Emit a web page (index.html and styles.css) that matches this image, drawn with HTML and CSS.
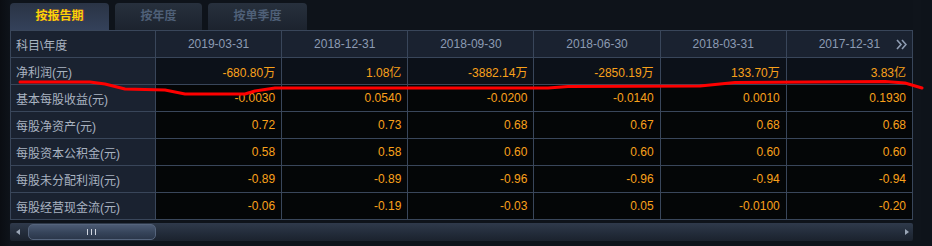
FILE: index.html
```html
<!DOCTYPE html>
<html lang="zh-CN">
<head>
  <meta charset="UTF-8">
  <title>财务指标</title>
  <link rel="stylesheet" href="styles.css">
</head>
<body>
  <div class="panel">
    <div class="tabs">
      <div class="tab active">按报告期</div>
      <div class="tab tab-year">按年度</div>
      <div class="tab">按单季度</div>
    </div>

    <table class="fin-table">
      <colgroup>
        <col class="col-label">
        <col><col><col><col><col><col>
      </colgroup>
      <thead>
        <tr>
          <th class="label">科目\年度</th>
          <th>2019-03-31</th>
          <th>2018-12-31</th>
          <th>2018-09-30</th>
          <th>2018-06-30</th>
          <th>2018-03-31</th>
          <th class="last">
            2017-12-31
            <span class="more">
              <svg width="11" height="11" viewBox="0 0 11 11">
                <path d="M1 1 L5 5.5 L1 10 M6 1 L10 5.5 L6 10" fill="none" stroke="#8e9cb2" stroke-width="1.6"/>
              </svg>
            </span>
          </th>
        </tr>
      </thead>
      <tbody>
        <tr class="hl">
          <td class="label">净利润(元)</td>
          <td>-680.80万</td>
          <td>1.08亿</td>
          <td>-3882.14万</td>
          <td>-2850.19万</td>
          <td>133.70万</td>
          <td>3.83亿</td>
        </tr>
        <tr>
          <td class="label">基本每股收益(元)</td>
          <td>-0.0030</td>
          <td>0.0540</td>
          <td>-0.0200</td>
          <td>-0.0140</td>
          <td>0.0010</td>
          <td>0.1930</td>
        </tr>
        <tr>
          <td class="label">每股净资产(元)</td>
          <td>0.72</td>
          <td>0.73</td>
          <td>0.68</td>
          <td>0.67</td>
          <td>0.68</td>
          <td>0.68</td>
        </tr>
        <tr>
          <td class="label">每股资本公积金(元)</td>
          <td>0.58</td>
          <td>0.58</td>
          <td>0.60</td>
          <td>0.60</td>
          <td>0.60</td>
          <td>0.60</td>
        </tr>
        <tr>
          <td class="label">每股未分配利润(元)</td>
          <td>-0.89</td>
          <td>-0.89</td>
          <td>-0.96</td>
          <td>-0.96</td>
          <td>-0.94</td>
          <td>-0.94</td>
        </tr>
        <tr>
          <td class="label">每股经营现金流(元)</td>
          <td>-0.06</td>
          <td>-0.19</td>
          <td>-0.03</td>
          <td>0.05</td>
          <td>-0.0100</td>
          <td>-0.20</td>
        </tr>
      </tbody>
    </table>

    <div class="hscroll">
      <span class="arrow arrow-left"></span>
      <div class="thumb"><span class="grip"></span></div>
      <span class="arrow arrow-right"></span>
    </div>
  </div>

  <!-- hand-drawn red mark over the table -->
  <svg class="scribble" width="932" height="246" viewBox="0 0 932 246">
    <polyline points="20,82 90,82 105,84 125,89 165,90 185,94 245,94 255,91 275,88 548,88 568,86.5 700,86 735,82.5 885,81.5 905,83 922,88"
      fill="none" stroke="#ff0000" stroke-width="3" stroke-linejoin="round" stroke-linecap="round"/>
  </svg>
</body>
</html>
```

FILE: styles.css
```css
html, body {
  margin: 0;
  padding: 0;
}
body {
  width: 932px;
  height: 246px;
  overflow: hidden;
  background: linear-gradient(to right, #0a0d12 0, #0e131a 10px, #0e131a 100%);
  font-family: "Liberation Sans", "Noto Sans CJK SC", sans-serif;
  font-size: 12px;
  position: relative;
}
.panel {
  padding: 3px 0 0 10px;
  width: 903px;
  border-right: 8px solid #0f141b;
}
.tabs {
  display: flex;
  gap: 6px;
  height: 27px;
}
.tab {
  width: 99px;
  height: 27px;
  box-sizing: border-box;
  line-height: 27px;
  text-align: center;
  font-weight: bold;
  font-size: 12px;
  color: #4f6078;
  background: linear-gradient(to bottom, #27303d, #1c232e);
  border-radius: 4px 4px 0 0;
}
.tab-year {
  width: 87px;
}
.tab.active {
  color: #f8d40a;
  background: linear-gradient(to bottom, #2a3445, #34415a);
  text-shadow: 1px 0 0 rgba(210, 40, 40, 0.55);
}
.fin-table {
  width: 903px;
  border-collapse: collapse;
  table-layout: fixed;
}
.col-label {
  width: 145px;
}
.fin-table th,
.fin-table td {
  height: 26px;
  padding: 0 6px;
  border: 1px solid #39465a;
  white-space: nowrap;
  overflow: hidden;
}
.fin-table th {
  background: #1a2230;
  color: #8c9bb3;
  font-weight: normal;
  text-align: center;
}
.fin-table th.last {
  position: relative;
}
.more {
  position: absolute;
  right: 5px;
  top: 8px;
  line-height: 0;
}
.fin-table td {
  background: #040607;
  color: #f9a11b;
  text-align: right;
}
.fin-table tr.hl td {
  background: #0c1119;
}
.fin-table .label,
.fin-table tr.hl td.label {
  text-align: left;
  padding-left: 5px;
  background: #1a2230;
  color: #a9b3c1;
}
.hscroll {
  margin-top: 3px;
  height: 18px;
  width: 903px;
  display: flex;
  align-items: center;
  background: linear-gradient(to bottom, #2f3a4b, #222b39 60%, #1b222d);
  border-radius: 2px;
}
.arrow {
  width: 0;
  height: 0;
  border-top: 3px solid transparent;
  border-bottom: 3px solid transparent;
}
.arrow-left {
  margin: 0 8px 0 6px;
  border-right: 4px solid #9aa6b6;
}
.arrow-right {
  margin-left: auto;
  margin-right: 4px;
  border-left: 4px solid #9aa6b6;
}
.thumb {
  width: 126px;
  height: 14px;
  border: 1px solid #55647c;
  border-radius: 5px;
  background: linear-gradient(to bottom, #4b5a73, #36445a 55%, #2b374a);
  display: flex;
  align-items: center;
  justify-content: center;
}
.grip {
  width: 11px;
  height: 6px;
  background: repeating-linear-gradient(to right, #d0d6e0 0, #d0d6e0 1px, transparent 1px, transparent 4px);
}
.scribble {
  position: absolute;
  left: 0;
  top: 0;
  pointer-events: none;
}
```
